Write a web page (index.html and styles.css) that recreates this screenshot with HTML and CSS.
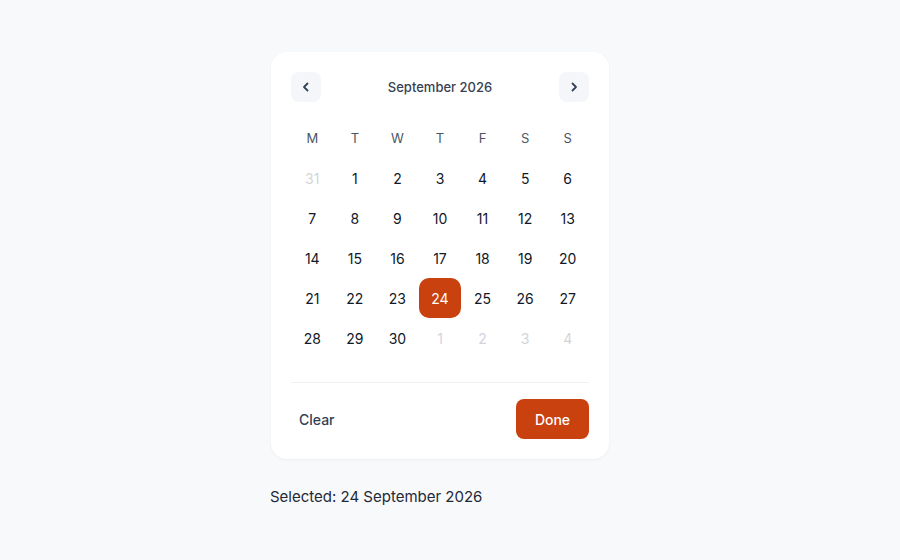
FILE: index.html
```html
<!DOCTYPE html>
<html>
<head>
<meta charset="utf-8">
<link rel="stylesheet" href="styles.css">
</head>
<body>
<div class="wrap">
  <div class="card">
    <div class="nav">
      <button class="navbtn" aria-label="Previous month">
        <svg width="12" height="12" viewBox="0 0 12 12"><path d="M7.5 2.5 L4 6 L7.5 9.5" fill="none" stroke="#334155" stroke-width="1.8" stroke-linecap="round" stroke-linejoin="round"/></svg>
      </button>
      <div class="title">September 2026</div>
      <button class="navbtn" aria-label="Next month">
        <svg width="12" height="12" viewBox="0 0 12 12"><path d="M4.5 2.5 L8 6 L4.5 9.5" fill="none" stroke="#334155" stroke-width="1.8" stroke-linecap="round" stroke-linejoin="round"/></svg>
      </button>
    </div>
    <div class="grid">
      <div class="wd">M</div><div class="wd">T</div><div class="wd">W</div><div class="wd">T</div><div class="wd">F</div><div class="wd">S</div><div class="wd">S</div>
      <div class="day muted">31</div><div class="day">1</div><div class="day">2</div><div class="day">3</div><div class="day">4</div><div class="day">5</div><div class="day">6</div>
      <div class="day">7</div><div class="day">8</div><div class="day">9</div><div class="day">10</div><div class="day">11</div><div class="day">12</div><div class="day">13</div>
      <div class="day">14</div><div class="day">15</div><div class="day">16</div><div class="day">17</div><div class="day">18</div><div class="day">19</div><div class="day">20</div>
      <div class="day">21</div><div class="day">22</div><div class="day">23</div><div class="day sel">24</div><div class="day">25</div><div class="day">26</div><div class="day">27</div>
      <div class="day">28</div><div class="day">29</div><div class="day">30</div><div class="day muted">1</div><div class="day muted">2</div><div class="day muted">3</div><div class="day muted">4</div>
    </div>
    <div class="divider"></div>
    <div class="footer">
      <button class="clear">Clear</button>
      <button class="done">Done</button>
    </div>
  </div>
  <p class="selected">Selected: 24 September 2026</p>
</div>
</body>
</html>
```
FILE: styles.css
```css
html, body {
  margin: 0;
  padding: 0;
  background: #f8f9fb;
  font-family: "Inter", "Liberation Sans", sans-serif;
  color: #111827;
}
.wrap {
  padding-top: 52px;
  margin-left: 271px;
  width: 338px;
}
.card {
  background: #ffffff;
  border-radius: 16px;
  padding: 20px;
  box-shadow: 0 1px 3px rgba(15, 23, 42, 0.05);
}
.nav {
  display: flex;
  align-items: center;
  justify-content: space-between;
  height: 30px;
}
.navbtn {
  width: 30px;
  height: 30px;
  border: none;
  border-radius: 8px;
  background: #f4f6fa;
  display: flex;
  align-items: center;
  justify-content: center;
  padding: 0;
}
.title {
  font-size: 13px;
  font-weight: 500;
  color: #374151;
}
.grid {
  margin-top: 16px;
  display: grid;
  grid-template-columns: repeat(7, 1fr);
  grid-auto-rows: 40px;
}
.wd {
  display: flex;
  align-items: center;
  justify-content: center;
  font-size: 13px;
  color: #4b5563;
}
.day {
  display: flex;
  align-items: center;
  justify-content: center;
  font-size: 14px;
  color: #111827;
  border-radius: 10px;
}
.day.muted {
  color: #d1d5db;
}
.day.sel {
  background: #c9410e;
  color: #ffffff;
}
.divider {
  margin-top: 24px;
  height: 1px;
  background: #eef0f3;
}
.footer {
  margin-top: 16px;
  display: flex;
  justify-content: space-between;
  align-items: center;
}
.clear {
  border: none;
  background: transparent;
  font-family: inherit;
  font-size: 14px;
  font-weight: 500;
  color: #334155;
  padding: 0 8px;
  height: 40px;
}
.done {
  border: none;
  background: #c9410e;
  color: #ffffff;
  font-family: inherit;
  font-size: 14px;
  font-weight: 500;
  border-radius: 8px;
  height: 40px;
  width: 73px;
}
.selected {
  margin: 28px 0 0 -1px;
  font-size: 15px;
  color: #1f2937;
}
```
